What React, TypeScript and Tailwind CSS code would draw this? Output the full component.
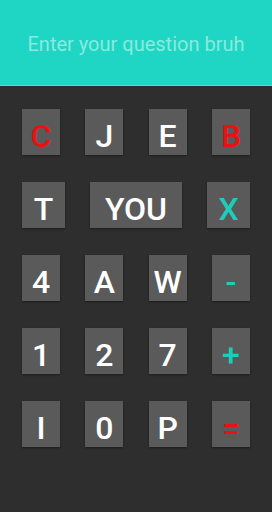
import React from "react";

type Key = { label: string; color?: string; width: string };

const rows: Key[][] = [
  [
    { label: "C", color: "text-[#e81212]", width: "w-[38px]" },
    { label: "J", width: "w-[38px]" },
    { label: "E", width: "w-[38px]" },
    { label: "B", color: "text-[#e81212]", width: "w-[38px]" },
  ],
  [
    { label: "T", width: "w-[43px]" },
    { label: "YOU", width: "w-[92px]" },
    { label: "X", color: "text-[#1ccdbb]", width: "w-[43px]" },
  ],
  [
    { label: "4", width: "w-[38px]" },
    { label: "A", width: "w-[38px]" },
    { label: "W", width: "w-[38px]" },
    { label: "-", color: "text-[#1ccdbb]", width: "w-[38px]" },
  ],
  [
    { label: "1", width: "w-[38px]" },
    { label: "2", width: "w-[38px]" },
    { label: "7", width: "w-[38px]" },
    { label: "+", color: "text-[#1ccdbb]", width: "w-[38px]" },
  ],
  [
    { label: "I", width: "w-[38px]" },
    { label: "0", width: "w-[38px]" },
    { label: "P", width: "w-[38px]" },
    { label: "=", color: "text-[#e81212]", width: "w-[38px]" },
  ],
];

const App = () => {
  return (
    <main className="w-[272px] h-[512px] bg-[#2e2e2e] font-['Roboto',sans-serif] overflow-hidden">
      <div className="h-[86px] bg-[#1ed6c3] border-b border-[#3de6d4] flex items-center justify-center">
        <p className="text-[20px] text-[#8aeadf] pt-[3px]">Enter your question bruh</p>
      </div>
      <div className="flex flex-col gap-[27px] px-[22px] pt-[23px]">
        {rows.map((row, i) => (
          <div key={i} className="flex justify-between">
            {row.map((k) => (
              <button
                key={k.label}
                className={`${k.width} h-[46px] bg-[#5a5a5a] flex items-center justify-center pt-[7px] text-[32px] font-medium leading-none shadow-[0_1px_2px_rgba(0,0,0,0.4)] ${k.color ?? "text-white"}`}
              >
                {k.label}
              </button>
            ))}
          </div>
        ))}
      </div>
    </main>
  );
};

export default App;
